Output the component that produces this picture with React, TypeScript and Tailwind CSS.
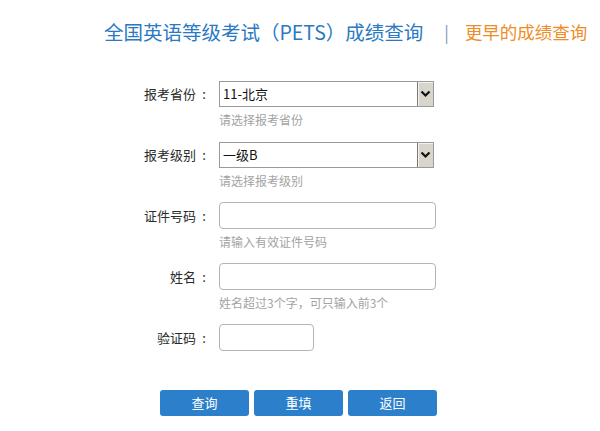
const FONT = { fontFamily: '"Noto Sans CJK SC", "Noto Sans", sans-serif' };

function Chevron() {
  return (
    <svg width="11" height="8" viewBox="0 0 11 8" aria-hidden>
      <polyline points="1.5,1.5 5.5,5.5 9.5,1.5" fill="none" stroke="#111" strokeWidth="2.2" />
    </svg>
  );
}

function FakeSelect({ value }: { value: string }) {
  return (
    <div className="flex h-[26px] w-[215px] items-stretch border border-[#9a9a9a] bg-white">
      <span className="flex flex-1 items-center pl-[3px] text-[13px] text-[#111]">{value}</span>
      <span className="flex w-[16px] items-center justify-center border-l border-[#7a7a7a] bg-[#d8d5cc] shadow-[inset_1px_1px_0_#f4f2ec]">
        <Chevron />
      </span>
    </div>
  );
}

function Row({
  label,
  hint,
  children,
  className = "",
}: {
  label: string;
  hint?: string;
  children: React.ReactNode;
  className?: string;
}) {
  return (
    <div className={className}>
      <div className="flex items-center">
        <label className="flex w-[212px] justify-end text-[13px] text-[#2b2b2b]">
          <span>{label}</span>
          <span className="w-[16px] text-center">:</span>
        </label>
        <div className="ml-[7px]">{children}</div>
      </div>
      {hint && (
        <p className="ml-[219px] mt-[4px] text-[12px] leading-[18px] text-[#a3a3a3]">{hint}</p>
      )}
    </div>
  );
}

export default function App() {
  const input = "block h-[27px] rounded-[4px] border border-[#b4b4b4] bg-white outline-none";
  return (
    <div className="h-[431px] w-[600px] overflow-hidden bg-white" style={FONT}>
      <header className="flex items-center pl-[104px] pt-[18px] leading-[28px]">
        <h1 className="text-[19.5px] text-[#2a79c2]">全国英语等级考试（PETS）成绩查询</h1>
        <span className="ml-[21px] text-[17px] text-[#7e9bb8]">|</span>
        <a className="ml-[16px] text-[17.5px] text-[#f08c26]">更早的成绩查询</a>
      </header>

      <form className="pt-[35px]">
        <Row label="报考省份" hint="请选择报考省份">
          <FakeSelect value="11-北京" />
        </Row>
        <Row label="报考级别" hint="请选择报考级别" className="mt-[13px]">
          <FakeSelect value="一级B" />
        </Row>
        <Row label="证件号码" hint="请输入有效证件号码" className="mt-[12px]">
          <input className={`${input} w-[217px]`} />
        </Row>
        <Row label="姓名" hint="姓名超过3个字，可只输入前3个" className="mt-[12px]">
          <input className={`${input} w-[217px]`} />
        </Row>
        <Row label="验证码" className="mt-[12px]">
          <input className={`${input} w-[95px]`} />
        </Row>

        <div className="ml-[160px] mt-[39px] flex gap-[5px]">
          {["查询", "重填", "返回"].map((t) => (
            <button
              key={t}
              type="button"
              className="h-[26px] w-[89px] rounded-[3px] bg-[#2c7fca] text-[13px] text-white"
            >
              {t}
            </button>
          ))}
        </div>
      </form>
    </div>
  );
}
